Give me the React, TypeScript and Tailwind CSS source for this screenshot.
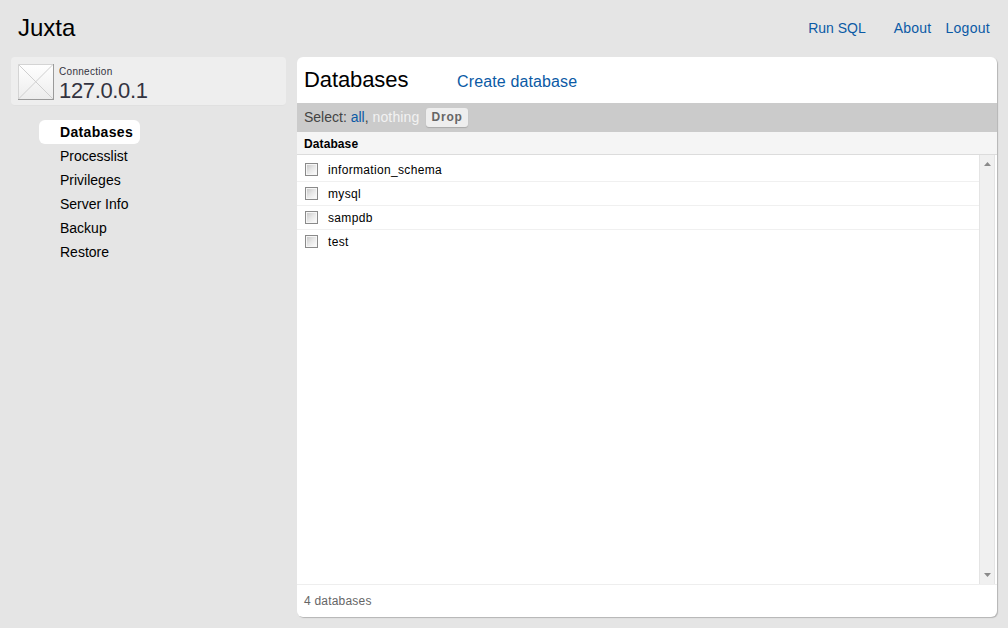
const sideLinks = ["Processlist", "Privileges", "Server Info", "Backup", "Restore"];
const databases = ["information_schema", "mysql", "sampdb", "test"];

function Thumb() {
  return (
    <svg width="36" height="36" viewBox="0 0 36 36" className="shrink-0">
      <defs>
        <linearGradient id="thumb" x1="0" y1="0" x2="0" y2="1">
          <stop offset="0" stopColor="#ffffff" />
          <stop offset="1" stopColor="#ececec" />
        </linearGradient>
      </defs>
      <rect x="0" y="0" width="36" height="36" fill="url(#thumb)" />
      <path d="M0.5 0.5L35 35M35 0.5L0.5 35" stroke="#cfcfcf" strokeWidth="1" fill="none" />
      <path d="M0.5 35V0.5H35" stroke="#d4d4d4" fill="none" />
      <path d="M0 35.5H36M35.5 0V36" stroke="#9a9a9a" fill="none" />
    </svg>
  );
}

function Check() {
  return (
    <span className="box-border block h-[13px] w-[13px] shrink-0 border border-[#8a8a8a] bg-gradient-to-br from-[#c4c4c4] via-[#e8e8e8] to-white shadow-[inset_0_0_0_1px_#f6f6f6]" />
  );
}

export default function App() {
  return (
    <div className="flex h-[628px] w-[1008px] flex-col overflow-hidden bg-[#e5e5e5] font-['Liberation_Sans',Arial,sans-serif]">
      <header className="flex h-[57px] shrink-0 items-start justify-between pl-[18px] pr-[18px]">
        <h1 className="mt-[14px] text-[24px] leading-[28px] text-black">Juxta</h1>
        <nav className="mt-[20px] flex text-[14px] leading-[16px] text-[#0b5aa5]">
          <a className="mr-[28px]">Run SQL</a>
          <a className="mr-[14px] tracking-[0.2px]">About</a>
          <a className="tracking-[0.3px]">Logout</a>
        </nav>
      </header>

      <div className="flex min-h-0 flex-1 pb-[11px] pl-[11px] pr-[11px]">
        <aside className="w-[275px] shrink-0">
          <div className="flex h-[49px] items-start rounded-[4px] border-b border-[#e0e0e0] bg-[#eeeeee] pl-[7px] pt-[7px]">
            <Thumb />
            <div className="ml-[5px] text-[#333340]">
              <div className="mt-[2px] text-[10px] leading-[12px] tracking-[0.3px]">Connection</div>
              <div className="mt-[1px] text-[22px] leading-[24px] tracking-[-0.35px]">127.0.0.1</div>
            </div>
          </div>
          <ul className="mt-[14px] pl-[28px] text-[14px] leading-[24px] text-black">
            <li className="h-[24px]">
              <a className="inline-block rounded-[6px] bg-white pl-[21px] pr-[7px] font-bold tracking-[0.33px]">Databases</a>
            </li>
            {sideLinks.map((label) => (
              <li key={label} className="h-[24px] pl-[21px]">
                {label}
              </li>
            ))}
          </ul>
        </aside>

        <main className="ml-[11px] flex min-w-0 flex-1 flex-col overflow-hidden rounded-[6px] bg-white shadow-[1px_1px_1px_#b4b4b4]">
          <div className="flex h-[46px] shrink-0 items-start pl-[7px]">
            <h2 className="mt-[9px] w-[153px] text-[22px] leading-[27px] tracking-[-0.1px] text-black">Databases</h2>
            <a className="mt-[16px] text-[16px] leading-[18px] tracking-[0.13px] text-[#0b5aa5]">Create database</a>
          </div>

          <div className="flex h-[29px] shrink-0 items-center bg-[#cbcbcb] pl-[7px] text-[14px] text-[#444444]">
            <span>Select:&nbsp;</span>
            <a className="text-[#0b5aa5]">all</a>
            <span>,&nbsp;</span>
            <a className="tracking-[0.15px] text-[#f2f2f2]">nothing</a>
            <button className="ml-[7px] h-[19px] rounded-[3px] bg-[#eeeeee] px-[5px] text-[12px] font-bold leading-[19px] tracking-[0.8px] text-[#666666] shadow-[0_1px_1px_#aaaaaa]">
              Drop
            </button>
          </div>

          <div className="h-[23px] shrink-0 border-b border-[#dcdcdc] bg-[#f5f5f5] pl-[7px] text-[12px] font-bold leading-[24px] tracking-[0.1px] text-black">
            Database
          </div>

          <div className="flex min-h-0 flex-1 border-b border-[#eeeeee]">
            <ul className="min-w-0 flex-1 pt-[3px]">
              {databases.map((name) => (
                <li key={name} className="flex h-[24px] items-center border-b border-[#f0f0f0] pl-[8px] text-[12px] text-black last:border-b-transparent">
                  <Check />
                  <span className="ml-[10px] tracking-[0.33px]">{name}</span>
                </li>
              ))}
            </ul>
            <div className="mr-[2px] flex w-[16px] shrink-0 flex-col items-center justify-between border-x border-[#e4e4e4] bg-[#f0f0f0] py-[7px]">
              <svg width="7" height="4" viewBox="0 0 7 4">
                <path d="M3.5 0L7 4H0Z" fill="#8a8a8a" />
              </svg>
              <svg width="7" height="4" viewBox="0 0 7 4">
                <path d="M0 0H7L3.5 4Z" fill="#8a8a8a" />
              </svg>
            </div>
          </div>

          <div className="h-[32px] shrink-0 pl-[7px] text-[12px] leading-[32px] tracking-[0.2px] text-[#666666]">4 databases</div>
        </main>
      </div>
    </div>
  );
}
